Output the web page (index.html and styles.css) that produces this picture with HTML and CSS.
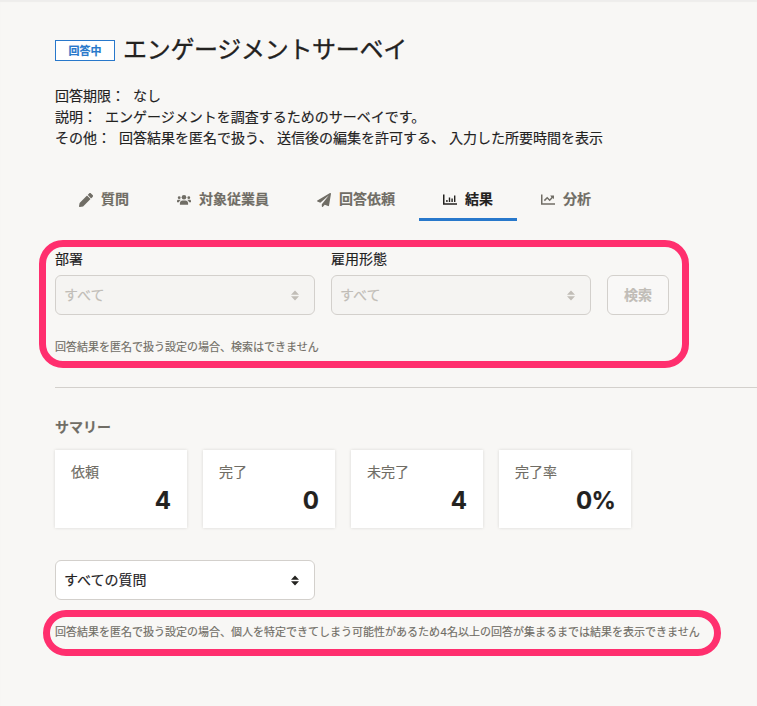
FILE: index.html
```html
<!DOCTYPE html>
<html lang="ja">
<head>
<meta charset="utf-8">
<title>エンゲージメントサーベイ</title>
<link rel="stylesheet" href="styles.css">
</head>
<body>
<main class="page">
  <header class="heading">
    <span class="badge">回答中</span>
    <h1>エンゲージメントサーベイ</h1>
  </header>
  <dl class="meta">
    <div class="row"><dt>回答期限：</dt><dd>なし</dd></div>
    <div class="row"><dt>説明：</dt><dd>エンゲージメントを調査するためのサーベイです。</dd></div>
    <div class="row"><dt>その他：</dt><dd class="options"><span>回答結果を匿名で扱う、</span><span>送信後の編集を許可する、</span><span>入力した所要時間を表示</span></dd></div>
  </dl>
  <nav class="tabs">
    <a class="tab"><svg viewBox="0 0 512 512"><path d="M498 142l-46 46c-5 5-13 5-17 0L324 77c-5-5-5-12 0-17l46-46c19-19 49-19 68 0l60 60c19 19 19 49 0 68zm-214-42L22 362 0 484c-3 16 12 30 28 28l122-22 262-262c5-5 5-13 0-17L301 100c-4-5-12-5-17 0z"/></svg>質問</a>
    <a class="tab"><svg viewBox="0 0 14 14"><circle cx="7" cy="4.300" r="2.300"/><circle cx="2.200" cy="4.700" r="1.400"/><circle cx="11.800" cy="4.700" r="1.400"/><path d="M2.900 11.700V10.200C2.900 8.500 4.100 7.400 5.500 7.400h3c1.400 0 2.600 1.100 2.600 2.800v1.500zM0 9.300V8.100C0 7.200.6 6.700 1.400 6.700h1.400c.4 0 .7.1.9.3-.9.500-1.500 1.300-1.600 2.300zM14 9.300V8.100c0-.9-.6-1.400-1.400-1.400h-1.400c-.4 0-.7.1-.9.3.9.5 1.500 1.300 1.600 2.300z"/></svg>対象従業員</a>
    <a class="tab"><svg viewBox="0 0 512 512"><path d="M476 3.200L12.500 270.600c-18.100 10.400-15.800 35.600 2.200 43.200L121 358.400l287.300-253.200c5.500-4.900 13.300 2.600 8.600 8.300L176 407v80.500c0 23.600 28.500 32.900 42.500 15.800L282 426l124.600 52.200c14.200 6 30.400-2.900 33-18.200l72-432C515 7.800 493.300-6.800 476 3.200z"/></svg>回答依頼</a>
    <a class="tab active"><svg viewBox="0 0 14 14"><path d="M0 1.500h1.500v8.800H14v1.500H0zM3.200 7h1.400v2H3.200zM5.800 4.500h1.400V9H5.800zM8.400 5.500h1.400V9H8.400zM11 2.500h1.400V9H11z"/></svg>結果</a>
    <a class="tab"><svg viewBox="0 0 14 14"><path d="M0 1.500h1.500v8.800H14v1.500H0zM9.200 2.500H13v3.800l-1.200-1.200-3.100 3.200-2.500-2.500-2.300 2.400-1.100-1.100 3.400-3.400 2.500 2.500 1.700-2z"/></svg>分析</a>
  </nav>
  <section class="filter">
    <div class="fields">
      <div class="field"><label>部署</label><div class="select disabled"><span>すべて</span><svg viewBox="0 0 8 10"><path d="M4 0l4 4.300H0zM0 5.700h8L4 10z"/></svg></div></div>
      <div class="field"><label>雇用形態</label><div class="select disabled"><span>すべて</span><svg viewBox="0 0 8 10"><path d="M4 0l4 4.300H0zM0 5.700h8L4 10z"/></svg></div></div>
      <button class="search" disabled>検索</button>
    </div>
    <p class="note">回答結果を匿名で扱う設定の場合、検索はできません</p>
    <div class="marker marker-filter"></div>
  </section>
  <hr>
  <section class="summary">
    <h2>サマリー</h2>
    <div class="cards">
      <div class="card"><span>依頼</span><strong>4</strong></div>
      <div class="card"><span>完了</span><strong>0</strong></div>
      <div class="card"><span>未完了</span><strong>4</strong></div>
      <div class="card"><span>完了率</span><strong class="rate">0%</strong></div>
    </div>
  </section>
  <section class="questions">
    <div class="select"><span>すべての質問</span><svg viewBox="0 0 8 10"><path d="M4 0l4 4.300H0zM0 5.700h8L4 10z"/></svg></div>
    <p class="note">回答結果を匿名で扱う設定の場合、個人を特定できてしまう可能性があるため4名以上の回答が集まるまでは結果を表示できません</p>
    <div class="marker marker-questions"></div>
  </section>
</main>
</body>
</html>
```
FILE: styles.css
```css
* { box-sizing: border-box; }
body {
  margin: 0;
  height: 706px;
  overflow: hidden;
  background: #f8f7f5;
  color: #23221f;
  font: 14px/21px Inter, "Noto Sans CJK JP", sans-serif;
  -webkit-text-stroke: .15px currentColor;
  box-shadow: inset 0 2px 1px #eeedec;
}
h1, h2, p, dl, dd { margin: 0; }
svg { fill: currentColor; flex: none; }
.page { padding: 32px 0 0 55px; }
.heading { display: flex; align-items: center; gap: 8px; height: 36px; }
.badge {
  width: 60px;
  height: 21px;
  border: 1px solid #2878cb;
  color: #2878cb;
  background: #fff;
  font-size: 11px;
  font-weight: 700;
  line-height: 20px;
  text-align: center;
}
h1 {
  font-size: 24px;
  font-weight: 400;
  line-height: 36px;
  letter-spacing: -.3px;
  white-space: nowrap;
  -webkit-text-stroke-width: .35px;
}
.meta { margin-top: 17px; }
.row { display: flex; gap: 8px; }
.options { display: flex; gap: 4px; }
.tabs { display: flex; margin-top: 30px; height: 43px; }
.tab {
  display: flex;
  align-items: center;
  gap: 8px;
  padding: 0 24px;
  border-bottom: 3px solid transparent;
  color: #706d65;
  font-weight: 700;
  white-space: nowrap;
}
.tab svg { width: 14px; height: 14px; margin-top: 3px; }
.tab.active { color: #23221f; border-color: #2878cb; }
.filter { position: relative; margin-top: 27px; }
.fields { display: flex; align-items: flex-end; gap: 16px; }
.field label { display: block; margin-bottom: 6px; }
.select {
  display: flex;
  align-items: center;
  justify-content: space-between;
  width: 260px;
  height: 40px;
  padding: 0 15px 0 8px;
  border: 1px solid #d3d0cc;
  border-radius: 6px;
  background: #fff;
}
.select span { padding-bottom: 2px; }
.select svg { width: 8px; height: 11px; }
.select.disabled { background: #f5f4f2; color: #c1bdb7; }
.search {
  width: 62px;
  height: 40px;
  padding: 0 0 2px;
  border: 1px solid #d3d0cc;
  border-radius: 6px;
  background: #f9f8f7;
  color: #c1bdb7;
  font: inherit;
  font-weight: 700;
}
.note { color: #706d65; font-size: 11px; line-height: 16px; white-space: nowrap; }
.filter .note { margin-top: 24px; }
.marker { position: absolute; border: 7px solid #ff2f6e; }
.marker-filter { left: -16px; top: -8px; width: 650px; height: 128px; border-radius: 24px; }
.marker-questions { left: -12px; top: 50px; width: 678px; height: 46px; border-radius: 23px; }
hr { margin: 32px 0 0; border: 0; border-top: 1px solid #d3d0cc; }
.summary { margin-top: 28px; }
h2 { color: #706d65; font-size: 14px; font-weight: 700; line-height: 21px; }
.cards { display: flex; gap: 16px; margin-top: 13px; }
.card {
  display: flex;
  flex-direction: column;
  width: 132px;
  height: 78px;
  padding: 11px 16px;
  background: #fff;
  box-shadow: 0 0 3px rgba(35, 34, 31, .14);
}
.card span { color: #706d65; }
.card strong { align-self: flex-end; margin-top: 1px; font-size: 24px; line-height: 36px; }
.card .rate { letter-spacing: -.8px; }
.questions { position: relative; margin-top: 32px; }
.questions .note { margin-top: 24px; }
```
